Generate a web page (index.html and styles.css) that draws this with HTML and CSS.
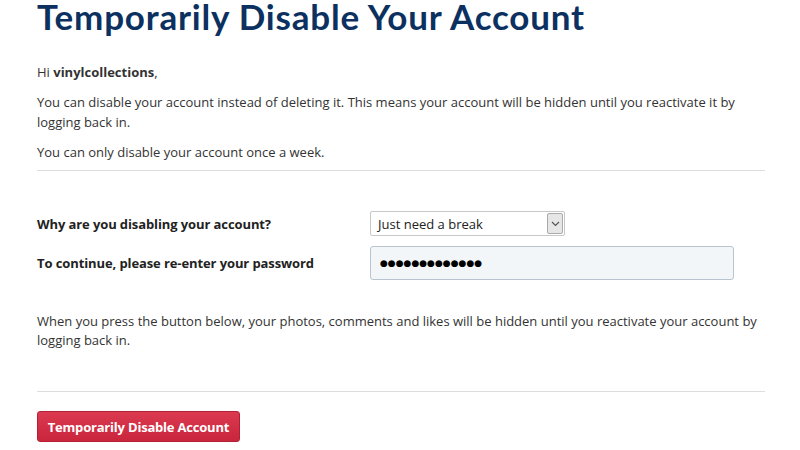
FILE: index.html
```html
<!DOCTYPE html>
<html>
<head>
<meta charset="utf-8">
<link rel="stylesheet" href="styles.css">
</head>
<body>
<div class="page">
  <h1 class="title">Temporarily Disable Your Account</h1>
  <p class="greet">Hi <b>vinylcollections</b>,</p>
  <p class="text">You can disable your account instead of deleting it. This means your account will be hidden until you reactivate it by logging back in.</p>
  <p class="text">You can only disable your account once a week.</p>
  <hr class="rule">
  <div class="form">
    <div class="row">
      <label class="label">Why are you disabling your account?</label>
      <div class="select">
        <span class="select-value">Just need a break</span>
        <span class="select-btn"><svg width="9" height="6" viewBox="0 0 9 6"><path d="M1 1l3.5 3.5L8 1" fill="none" stroke="#555" stroke-width="1.2"/></svg></span>
      </div>
    </div>
    <div class="row">
      <label class="label">To continue, please re-enter your password</label>
      <div class="input">●●●●●●●●●●●●●</div>
    </div>
  </div>
  <p class="text note">When you press the button below, your photos, comments and likes will be hidden until you reactivate your account by logging back in.</p>
  <hr class="rule rule2">
  <button class="btn">Temporarily Disable Account</button>
</div>
</body>
</html>
```
FILE: styles.css
```css
html, body { margin: 0; padding: 0; background: #fff; }
body { font-family: "Open Sans", "Liberation Sans", sans-serif; color: #333; font-size: 13px; }
.page { width: 728px; padding-left: 37px; }
.title { margin: 0; font-family: Lato, "Open Sans", sans-serif; font-size: 35px; line-height: 33px; font-weight: 700; color: #0c3160; letter-spacing: 0.8px; }
.greet { margin: 29px 0 0; line-height: 20px; }
.text { margin: 10px 0 0; line-height: 20px; }
.greet + .text { margin-top: 10px; }
.rule { border: 0; border-top: 1px solid #ddd; margin: 8px 0 0; }
.form { padding-top: 40px; display: flex; flex-direction: column; gap: 10px; }
.row { display: flex; align-items: center; }
.label { width: 333px; font-weight: 700; color: #222; letter-spacing: -0.1px; }
.select { width: 195px; height: 25px; box-sizing: border-box; border: 1px solid #c8c8c8; border-radius: 2px; display: flex; align-items: center; justify-content: space-between; background: #fff; }
.select-value { padding-left: 7px; color: #222; }
.select-btn { width: 16px; height: 21px; margin-right: 1px; border: 1px solid #aaa; border-radius: 2px; background: #e6e6e6; box-sizing: border-box; display: flex; align-items: center; justify-content: center; }
.input { width: 364px; height: 34px; box-sizing: border-box; border: 1px solid #b8c4cf; border-radius: 3px; background: #f3f6f8; padding-left: 9px; display: flex; align-items: center; font-family: "DejaVu Sans", sans-serif; font-size: 9px; letter-spacing: 0px; color: #000; }
.note { margin-top: 32px; line-height: 19px; }
.rule2 { margin-top: 41px; }
.btn { margin-top: 19px; width: 203px; height: 31px; border: 1px solid #b32035; border-radius: 3px; background: linear-gradient(#db3a50, #c9253d); color: #fff; font-family: inherit; font-weight: 700; font-size: 13px; padding: 0; letter-spacing: -0.2px; }
```
